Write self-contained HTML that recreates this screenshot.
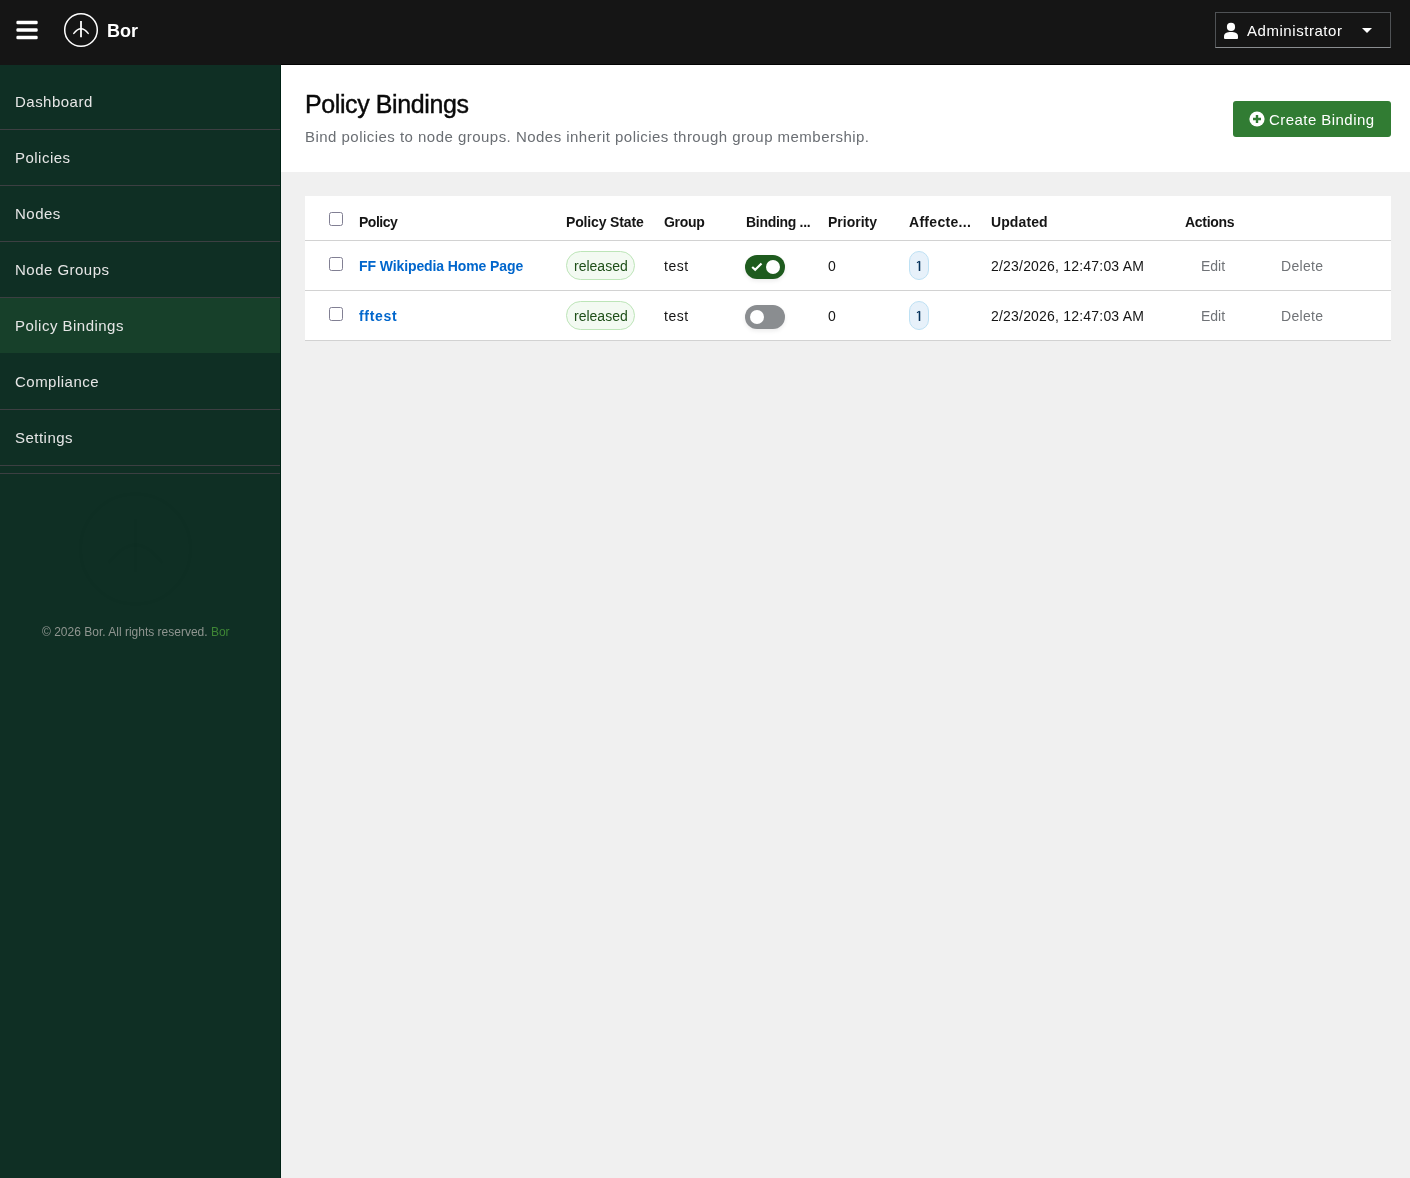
<!DOCTYPE html>
<html>
<head>
<meta charset="utf-8">
<style>
html,body{margin:0;padding:0;}
body{width:1410px;height:1178px;overflow:hidden;background:#f0f0f0;position:relative;font-family:"Liberation Sans",sans-serif;color:#151515;}
.abs{position:absolute;}
.t{position:absolute;white-space:nowrap;line-height:20px;will-change:transform;}
#hdr{left:0;top:0;width:1410px;height:65px;background:#151515;}
#hdrline{left:281px;top:64px;width:1129px;height:1px;background:#030303;}
#side{left:0;top:65px;width:280px;height:1113px;background:#0f2f24;}
#sideb{left:280px;top:65px;width:1px;height:1113px;background:#002114;}
.sep{position:absolute;left:0;width:280px;height:1px;background:#3c3f42;}
.nav{position:absolute;left:15px;font-size:15px;letter-spacing:0.48px;color:#e6e6e6;}
#pghead{left:281px;top:65px;width:1129px;height:107px;background:#fff;}
#card{left:305px;top:196px;width:1086px;height:145px;background:#fff;}
.hl{position:absolute;left:305px;width:1086px;height:1px;background:#d2d2d2;}
.th{font-size:14px;font-weight:bold;letter-spacing:-0.5px;color:#151515;}
.td{font-size:14px;color:#151515;}
.cb{position:absolute;width:12px;height:12px;border:1px solid #817f93;border-radius:2.5px;background:#fff;}
.lab{position:absolute;height:27px;border:1px solid #bde5b8;background:#f3faf2;border-radius:15px;}
.cnt{position:absolute;width:18px;height:27px;border:1px solid #bee1f4;background:#e7f1fa;border-radius:10px;}
.tog{position:absolute;width:40px;height:24px;border-radius:12px;}
.knob{position:absolute;width:14px;height:14px;border-radius:50%;background:#fff;top:5px;}
.act{font-size:14px;color:#707377;}
</style>
</head>
<body>
<div id="hdr" class="abs"></div>
<div id="hdrline" class="abs"></div>
<!-- hamburger -->
<svg class="abs" style="left:14px;top:18px" width="26" height="24" viewBox="0 0 26 24">
  <rect x="2.4" y="2.7" width="21.3" height="3.5" rx="1.3" fill="#fff"/>
  <rect x="2.4" y="10.2" width="21.3" height="3.6" rx="1.3" fill="#fff"/>
  <rect x="2.4" y="17.8" width="21.3" height="3.5" rx="1.3" fill="#fff"/>
</svg>
<!-- logo -->
<svg class="abs" style="left:62px;top:11px" width="38" height="38" viewBox="0 0 38 38">
  <circle cx="19" cy="19" r="16.3" fill="none" stroke="#fff" stroke-width="1.5"/>
  <line x1="19" y1="10" x2="19" y2="26.2" stroke="#fff" stroke-width="1.8"/>
  <path d="M11.8 22.4 Q19 13 26.2 22.4" fill="none" stroke="#fff" stroke-width="1.5" stroke-linecap="round"/>
</svg>
<div class="t" style="left:107px;top:21px;font-size:18px;font-weight:bold;color:#fff;">Bor</div>

<!-- user menu -->
<div class="abs" style="left:1215px;top:12px;width:174px;height:34px;border:1px solid #4f5255;border-bottom-color:#8a8d90;"></div>
<svg class="abs" style="left:1224px;top:22px" width="14" height="18" viewBox="0 0 14 18">
  <circle cx="7" cy="4.9" r="4.1" fill="#fff"/>
  <path d="M0 14.5 C0 10.8 3 9.9 7 9.9 C11 9.9 14 10.8 14 14.5 L14 16 Q14 17 13 17 L1 17 Q0 17 0 16 Z" fill="#fff"/>
</svg>
<div class="t" style="left:1247px;top:21px;font-size:15px;letter-spacing:0.55px;color:#fff;">Administrator</div>
<svg class="abs" style="left:1361px;top:27px" width="12" height="7" viewBox="0 0 12 7">
  <path d="M1 1 L11 1 L6 6 Z" fill="#fff"/>
</svg>

<!-- sidebar -->
<div id="side" class="abs"></div>
<div id="sideb" class="abs"></div>
<div class="abs" style="left:0;top:298px;width:280px;height:55px;background:#17402a;"></div>
<svg class="abs" style="left:75px;top:489px" width="121" height="121" viewBox="0 0 121 121">
  <g fill="none" stroke="#000" stroke-opacity="0.008" stroke-width="3.5">
  <circle cx="60.5" cy="60" r="55"/>
  <line x1="60.5" y1="30" x2="60.5" y2="83"/>
  <path d="M34.5 73 Q60.5 39 86.5 73" stroke-linecap="round"/>
  </g>
</svg>
<div class="sep" style="top:129px"></div>
<div class="sep" style="top:185px"></div>
<div class="sep" style="top:241px"></div>
<div class="sep" style="top:297px"></div>
<div class="sep" style="top:409px"></div>
<div class="sep" style="top:465px"></div>
<div class="sep" style="top:473px"></div>
<div class="t nav" style="top:92px">Dashboard</div>
<div class="t nav" style="top:148px">Policies</div>
<div class="t nav" style="top:204px">Nodes</div>
<div class="t nav" style="top:260px">Node Groups</div>
<div class="t nav" style="top:316px">Policy Bindings</div>
<div class="t nav" style="top:372px">Compliance</div>
<div class="t nav" style="top:428px">Settings</div>
<div class="t" style="left:42px;top:622px;font-size:12px;color:#8f9590;">© 2026 Bor. All rights reserved. <span style="color:#3e8635">Bor</span></div>

<!-- page header -->
<div id="pghead" class="abs"></div>
<div class="t" style="left:305px;top:90px;font-size:25px;line-height:28px;letter-spacing:-0.4px;color:#0a0a0a;-webkit-text-stroke:0.4px #0a0a0a;">Policy Bindings</div>
<div class="t" style="left:305px;top:127px;font-size:15px;letter-spacing:0.47px;color:#6a6e73;">Bind policies to node groups. Nodes inherit policies through group membership.</div>
<div class="abs" style="left:1233px;top:101px;width:158px;height:36px;background:#317c33;border-radius:3px;"></div>
<svg class="abs" style="left:1249px;top:111px" width="16" height="16" viewBox="0 0 16 16">
  <circle cx="8" cy="8" r="7.6" fill="#fff"/>
  <path d="M8 4 V12 M4 8 H12" stroke="#317c33" stroke-width="2.4"/>
</svg>
<div class="t" style="left:1269px;top:110px;font-size:15px;letter-spacing:0.45px;color:#fff;">Create Binding</div>

<!-- table -->
<div id="card" class="abs"></div>
<div class="hl" style="top:240px"></div>
<div class="hl" style="top:290px"></div>
<div class="hl" style="top:340px"></div>

<div class="cb" style="left:329px;top:212px"></div>
<div class="t th" style="left:359px;top:212px">Policy</div>
<div class="t th" style="left:566px;top:212px;letter-spacing:-0.15px">Policy State</div>
<div class="t th" style="left:664px;top:212px;letter-spacing:-0.3px">Group</div>
<div class="t th" style="left:746px;top:212px;letter-spacing:-0.3px">Binding ...</div>
<div class="t th" style="left:828px;top:212px;letter-spacing:0px">Priority</div>
<div class="t th" style="left:909px;top:212px;letter-spacing:0.3px">Affecte...</div>
<div class="t th" style="left:991px;top:212px;letter-spacing:0.1px">Updated</div>
<div class="t th" style="left:1185px;top:212px;letter-spacing:-0.3px">Actions</div>

<!-- row 1 -->
<div class="cb" style="left:329px;top:257px"></div>
<div class="t th" style="left:359px;top:256px;color:#0066cc;letter-spacing:-0.1px">FF Wikipedia Home Page</div>
<div class="lab" style="left:566px;top:251px;width:67px;"></div>
<div class="t td" style="left:574px;top:256px;color:#1e4f18;">released</div>
<div class="t td" style="left:664px;top:256px;letter-spacing:0.5px">test</div>
<div class="tog" style="left:745px;top:255px;background:#1e5b1e;box-shadow:0 2px 4px rgba(0,0,0,0.08);">
  <svg class="abs" style="left:6px;top:7px" width="12" height="10" viewBox="0 0 12 10"><path d="M1.2 5 L4.2 7.8 L10.5 1.5" fill="none" stroke="#fff" stroke-width="2.2"/></svg>
  <div class="knob" style="left:21px"></div>
</div>
<div class="t td" style="left:828px;top:256px;">0</div>
<div class="cnt" style="left:909px;top:251px;"></div>
<svg class="abs" style="left:914px;top:259px" width="10" height="14" viewBox="0 0 10 14"><path d="M5.5 2.2 V12" fill="none" stroke="#06315a" stroke-width="1.55"/><path d="M3 3.7 L5.6 2.1" fill="none" stroke="#06315a" stroke-width="1.1"/></svg>
<div class="t td" style="left:991px;top:256px;letter-spacing:0.2px">2/23/2026, 12:47:03 AM</div>
<div class="t act" style="left:1201px;top:256px">Edit</div>
<div class="t act" style="left:1281px;top:256px;letter-spacing:0.3px">Delete</div>

<!-- row 2 -->
<div class="cb" style="left:329px;top:307px"></div>
<div class="t th" style="left:359px;top:306px;color:#0066cc;letter-spacing:0.7px">fftest</div>
<div class="lab" style="left:566px;top:301px;width:67px;"></div>
<div class="t td" style="left:574px;top:306px;color:#1e4f18;">released</div>
<div class="t td" style="left:664px;top:306px;letter-spacing:0.5px">test</div>
<div class="tog" style="left:745px;top:305px;background:#8a8d90;box-shadow:0 2px 4px rgba(0,0,0,0.08);">
  <div class="knob" style="left:5px"></div>
</div>
<div class="t td" style="left:828px;top:306px;">0</div>
<div class="cnt" style="left:909px;top:301px;"></div>
<svg class="abs" style="left:914px;top:309px" width="10" height="14" viewBox="0 0 10 14"><path d="M5.5 2.2 V12" fill="none" stroke="#06315a" stroke-width="1.55"/><path d="M3 3.7 L5.6 2.1" fill="none" stroke="#06315a" stroke-width="1.1"/></svg>
<div class="t td" style="left:991px;top:306px;letter-spacing:0.2px">2/23/2026, 12:47:03 AM</div>
<div class="t act" style="left:1201px;top:306px">Edit</div>
<div class="t act" style="left:1281px;top:306px;letter-spacing:0.3px">Delete</div>
</body>
</html>
